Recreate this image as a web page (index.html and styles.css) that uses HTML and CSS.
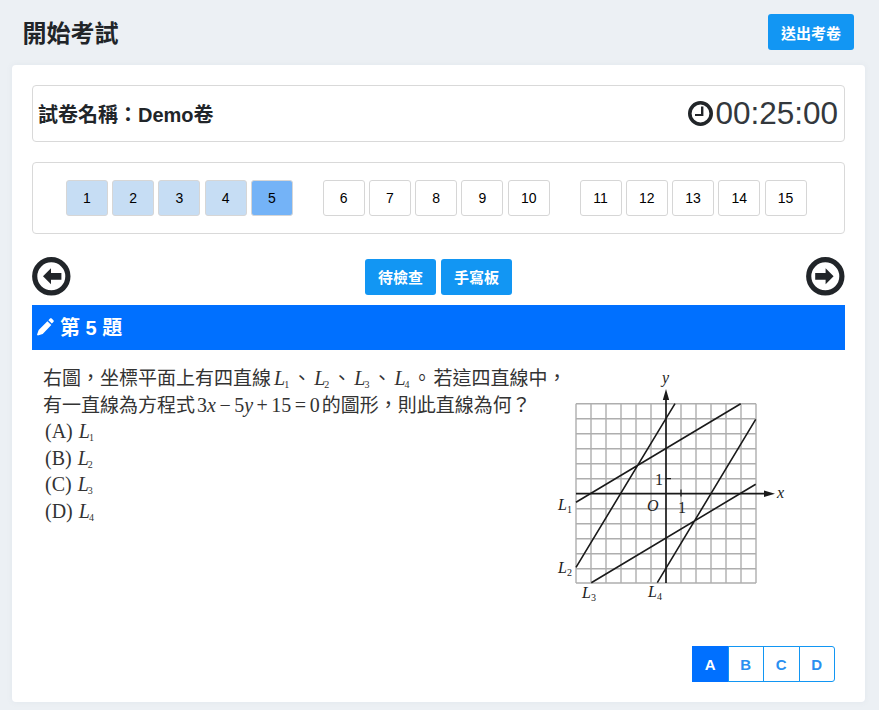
FILE: index.html
```html
<!DOCTYPE html>
<html lang="zh-Hant">
<head>
<meta charset="utf-8">
<title>開始考試</title>
<link rel="stylesheet" href="styles.css">
</head>
<body>
<header class="page-head">
  <h1 class="page-title">開始考試</h1>
  <button class="btn">送出考卷</button>
</header>
<main class="card">
  <section class="panel info">
    <div class="paper-name">試卷名稱：Demo卷</div>
    <div class="timer">
      <svg class="clock" width="25" height="25" viewBox="0 0 25 25"><circle cx="12.5" cy="12.5" r="10.7" fill="none" stroke="#212529" stroke-width="3.6"/><path d="M13 5.5h2.4v9.6H7v-2.2h6z" fill="#212529"/></svg>
      <span>00:25:00</span>
    </div>
  </section>
  <section class="panel nav-panel">
    <div class="num-group">
      <button class="num done">1</button><button class="num done">2</button><button class="num done">3</button><button class="num done">4</button><button class="num current">5</button>
    </div>
    <div class="num-group">
      <button class="num">6</button><button class="num">7</button><button class="num">8</button><button class="num">9</button><button class="num">10</button>
    </div>
    <div class="num-group">
      <button class="num">11</button><button class="num">12</button><button class="num">13</button><button class="num">14</button><button class="num">15</button>
    </div>
  </section>
  <section class="actions">
    <svg class="round-arrow" width="39" height="39" viewBox="0 0 39 39"><circle cx="19.3" cy="19.3" r="16.6" fill="#fff" stroke="#212529" stroke-width="5.2"/><path d="M11 19.3l8-8v4.6h10.4v6.8H19v4.6z" fill="#212529"/></svg>
    <div class="action-btns">
      <button class="btn">待檢查</button>
      <button class="btn">手寫板</button>
    </div>
    <svg class="round-arrow" width="39" height="39" viewBox="0 0 39 39"><circle cx="19.3" cy="19.3" r="16.6" fill="#fff" stroke="#212529" stroke-width="5.2"/><path d="M27.6 19.3l-8-8v4.6H9.2v6.8h10.4v4.6z" fill="#212529"/></svg>
  </section>
  <h2 class="q-bar">
    <svg class="pencil" width="17" height="18" viewBox="0 0 17 18"><path d="M11.4 2.2l1.6-1.6c.5-.5 1.2-.5 1.7 0l1.7 1.7c.5.5.5 1.2 0 1.7l-1.6 1.6zM10.4 3.2l3.9 3.9-8.6 8.8-4.9 1.6-.8-.8 1.7-4.8z" fill="#fff"/></svg>
    <span>第 5 題</span>
  </h2>
  <section class="question">
    <div class="q-text">
      <p class="q-line">右圖，坐標平面上有四直線<i class="var lead">L<sub>1</sub></i><span class="sep">、</span><i class="var">L<sub>2</sub></i><span class="sep">、</span><i class="var">L<sub>3</sub></i><span class="sep">、</span><i class="var">L<sub>4</sub></i><span class="sep">。</span>若這四直線中，</p>
      <p class="q-line">有一直線為方程式<span class="eq">3<i>x</i> − 5<i>y</i> + 15 = 0</span>的圖形，則此直線為何？</p>
      <p class="q-opt">(A) <i class="var">L<sub>1</sub></i></p>
      <p class="q-opt">(B) <i class="var">L<sub>2</sub></i></p>
      <p class="q-opt">(C) <i class="var">L<sub>3</sub></i></p>
      <p class="q-opt">(D) <i class="var">L<sub>4</sub></i></p>
    </div>
    <svg class="graph" width="235" height="244" viewBox="555 366 235 244">
      <g stroke="#aeaeae" stroke-width="1.4" fill="none">
        <path d="M576 403.7h180M576 418.7h180M576 433.7h180M576 448.7h180M576 463.7h180M576 478.7h180M576 508.7h180M576 523.7h180M576 538.7h180M576 553.7h180M576 568.7h180M576 583h180"/>
        <path d="M576 403.7v179.3M591 403.7v179.3M606 403.7v179.3M621 403.7v179.3M636 403.7v179.3M651 403.7v179.3M681 403.7v179.3M696 403.7v179.3M711 403.7v179.3M726 403.7v179.3M741 403.7v179.3M756 403.7v179.3"/>
      </g>
      <g stroke="#1a1a1a" fill="none">
        <path stroke-width="1.6" d="M576 502.3L740.7 403.7M576 567.3L675 403.7M591.3 582.7L755.7 484.3M657.3 582.7L755.7 419.3"/>
        <path stroke-width="1.7" d="M666 583V396M576 493.7H766"/>
        <path stroke-width="1.2" d="M666 478.7h5M681 489.5v7"/>
      </g>
      <path d="M666 389l-3.2 11h6.4zM775 493.7l-11-3.2v6.4z" fill="#1a1a1a"/>
      <g class="g-label">
        <text x="662" y="383" class="it">y</text>
        <text x="777" y="498" class="it">x</text>
        <text x="655" y="485">1</text>
        <text x="678" y="513">1</text>
        <text x="647" y="511" class="it">O</text>
        <text x="558" y="510" class="it">L<tspan class="g-sub" dy="3">1</tspan></text>
        <text x="558" y="573" class="it">L<tspan class="g-sub" dy="3">2</tspan></text>
        <text x="582" y="598" class="it">L<tspan class="g-sub" dy="3">3</tspan></text>
        <text x="648" y="597" class="it">L<tspan class="g-sub" dy="3">4</tspan></text>
      </g>
    </svg>
  </section>
  <div class="answers">
    <button class="ans on">A</button><button class="ans">B</button><button class="ans">C</button><button class="ans">D</button>
  </div>
</main>
</body>
</html>
```

FILE: styles.css
```css
* { box-sizing: border-box; }
html, body { margin: 0; padding: 0; }
body {
  background: #ecf0f4;
  color: #212529;
  font-family: "Liberation Sans", "Noto Sans CJK TC", sans-serif;
  padding: 0 14px 8px 12px;
}
.page-head {
  display: flex;
  justify-content: space-between;
  align-items: center;
  height: 65px;
  padding: 0 11px 1px 10.5px;
}
.page-title { margin: 0; padding-top: 4px; font-size: 24px; font-weight: 700; line-height: 1.2; }
.btn {
  height: 36px;
  padding: 0 13px;
  border: 0;
  border-radius: 3px;
  background: #1296f3;
  color: #fff;
  font: 700 15px "Liberation Sans", "Noto Sans CJK TC", sans-serif;
}
.card {
  background: #fff;
  border-radius: 4px;
  padding: 20px;
  height: 637px;
  box-shadow: 0 0 6px rgba(120, 130, 150, .08);
}
.panel {
  border: 1px solid #d9d9d9;
  border-radius: 4px;
}
.info {
  display: flex;
  justify-content: space-between;
  align-items: center;
  height: 57px;
  padding: 0 6px 0 5px;
}
.paper-name { font-size: 20px; font-weight: 700; }
.timer {
  display: flex;
  align-items: center;
  gap: 2px;
  font-size: 31.5px;
  line-height: 1;
  color: #33383d;
}
.clock { display: block; }
.nav-panel {
  display: flex;
  justify-content: center;
  gap: 29.9px;
  height: 72px;
  margin-top: 20px;
  padding: 17px 4.6px 0 0;
}
.num-group { display: flex; gap: 4.25px; }
.num {
  width: 42px;
  height: 36px;
  padding: 0;
  background: #fff;
  border: 1px solid #d6d6d6;
  border-radius: 3px;
  color: #000;
  font: 400 14px "Liberation Sans", sans-serif;
}
.num.done { background: #c6ddf4; }
.num.current { background: #74b3f7; }
.actions {
  display: flex;
  justify-content: space-between;
  align-items: center;
  height: 39px;
  margin: 23px 0 9px;
}
.round-arrow { display: block; }
.action-btns { display: flex; gap: 5px; }
.q-bar {
  display: flex;
  align-items: center;
  gap: 6px;
  height: 45px;
  margin: 0;
  padding: 0 0 2px 5px;
  background: #0070ff;
  color: #fff;
  font-size: 20px;
  font-weight: 700;
}
.question {
  display: flex;
  padding: 16px 55px 0 11px;
}
.q-text {
  flex: 1;
  min-width: 0;
  font-family: "Liberation Serif", "Noto Sans CJK TC", serif;
  font-size: 19px;
  line-height: 26.6px;
  color: #333;
  white-space: nowrap;
}
.q-text p { margin: 0; height: 26.6px; }
.q-opt { padding-left: 2px; font-size: 20px; line-height: 24px; }
.var { font-size: 20px; margin: 0 1px; line-height: 0; }
.var.lead { margin-left: 3px; }
sub { font-size: 10px; font-style: normal; line-height: 0; vertical-align: -3px; margin-left: -1px; }
.sep { display: inline-block; margin: 0 2px 0 2px; line-height: 0; }
.eq { margin: 0 2px 0 2px; font-size: 20px; word-spacing: -1.5px; line-height: 0; }
.graph { display: block; flex: none; }
.g-label text { font-family: "Liberation Serif", serif; font-size: 16px; fill: #222; }
.g-label .it { font-style: italic; }
.g-label .g-sub { font-size: 10px; font-style: normal; }
.answers {
  display: flex;
  justify-content: flex-end;
  margin: 36px 10px 0 0;
}
.ans {
  width: 36.5px;
  height: 36px;
  margin-left: -1px;
  padding: 0;
  background: #fff;
  border: 1px solid #1296f3;
  color: #2a8ff0;
  font: 700 15px "Liberation Sans", sans-serif;
}
.ans:last-child { border-radius: 0 3px 3px 0; }
.ans.on { background: #0070ff; border-color: #0070ff; color: #fff; }
```
